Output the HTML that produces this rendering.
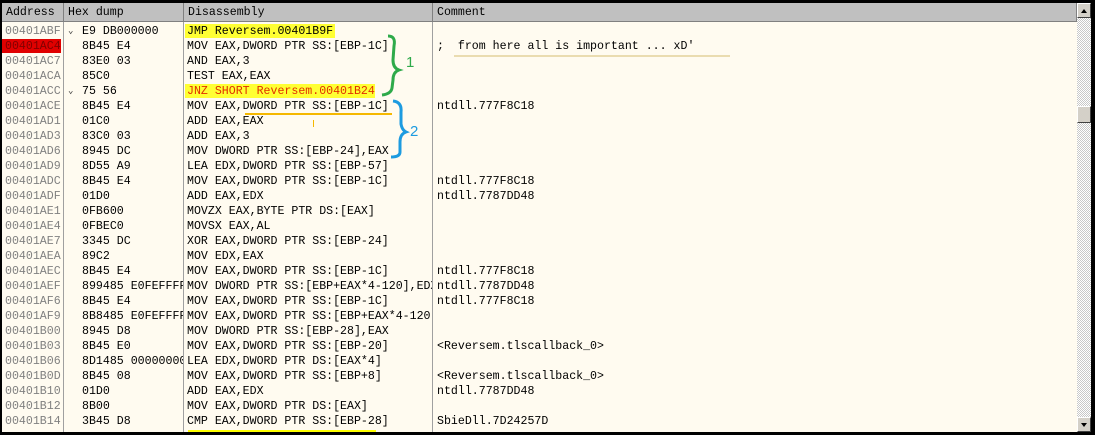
<!DOCTYPE html>
<html><head><meta charset="utf-8"><style>
body{margin:0;width:1095px;height:435px;background:#000;overflow:hidden;position:relative;font-family:"Liberation Mono","Courier New",monospace;font-size:11.6px;}
#win{position:absolute;left:2px;top:3px;width:1089px;height:429px;background:#fffbf0;overflow:hidden}
.hdr{position:absolute;top:0;height:19px;background:#c0c0c0;border-bottom:1px solid #808080;color:#000;line-height:19px;padding-left:4px;box-sizing:border-box;border-right:1px solid #808080}
.col{position:absolute;top:19px;bottom:0;border-right:1px solid #a0a0a0}
.r{position:absolute;height:15px;line-height:15px;white-space:pre}
.a{color:#808080;left:3px}
.h{left:80px;color:#000}
.d{left:185px;color:#000}
.c{left:435px;color:#000}
.sb{position:absolute;left:1075px;top:0;width:14px;height:429px;background:repeating-conic-gradient(#fff 0 25%,#c8c8c8 0 50%) 0 0/2px 2px}
.btn{position:absolute;left:0;width:14px;height:15px;background:#d4d0c8;border:1px solid;border-color:#fff #404040 #404040 #fff;box-sizing:border-box}
</style></head><body><div id="win">
<div class="hdr" style="left:0;width:62px">Address</div>
<div class="hdr" style="left:62px;width:120px">Hex dump</div>
<div class="hdr" style="left:182px;width:249px">Disassembly</div>
<div class="hdr" style="left:431px;width:644px">Comment</div>
<div class="col" style="left:0;width:61px"></div>
<div class="col" style="left:62px;width:119px"></div>
<div class="col" style="left:182px;width:248px"></div>
<div style="position:absolute;left:0;top:36px;width:59px;height:14px;background:#e00000"></div>
<div style="position:absolute;left:183px;top:21px;width:150px;height:14px;background:#ffff33"></div>
<div style="position:absolute;left:183px;top:81px;width:190px;height:14px;background:#ffff33"></div>
<div id="rows"></div>
<div style="position:absolute;left:243px;top:110px;width:147px;height:2px;background:#f5b800"></div>
<div style="position:absolute;left:311px;top:117px;width:1px;height:7px;background:#f5b800"></div>
<div style="position:absolute;left:452px;top:52px;width:276px;height:2px;background:#eadcb0"></div>
<div style="position:absolute;left:186px;top:427px;width:188px;height:3px;background:#ffff00"></div>
<svg style="position:absolute;left:0;top:1px" width="1089" height="429">
<path d="M386 32 Q394 32 392 42 L391 56 Q391 64 397 66 Q391 68 391 76 L390 84 Q389 90 380 91" fill="none" stroke="#2eaa4a" stroke-width="3"/>
<path d="M391 97 Q400 98 399 108 L399 120 Q400 126 404 128 Q398 130 398 138 L398 148 Q398 153 389 153" fill="none" stroke="#1d9be0" stroke-width="3"/>
<text x="404" y="63" font-family="Liberation Sans" font-size="15" fill="#2eaa4a">1</text>
<text x="408" y="132" font-family="Liberation Sans" font-size="15" fill="#1d9be0">2</text>
</svg>
<div class="sb"><div class="btn" style="top:0"><div style="position:absolute;left:3px;top:5px;border:3.5px solid transparent;border-bottom:4px solid #000;border-top:0"></div></div>
<div class="btn" style="top:103px;height:17px"></div>
<div class="btn" style="top:414px"><div style="position:absolute;left:3px;top:5px;border:3.5px solid transparent;border-top:4px solid #000;border-bottom:0"></div></div></div>
</div>
<script>
var R=[["00401ABF","E9 DB000000","JMP Reversem.00401B9F","",1],
["00401AC4","8B45 E4","MOV EAX,DWORD PTR SS:[EBP-1C]",";  from here all is important ... xD'"],
["00401AC7","83E0 03","AND EAX,3",""],
["00401ACA","85C0","TEST EAX,EAX",""],
["00401ACC","75 56","JNZ SHORT Reversem.00401B24","",1],
["00401ACE","8B45 E4","MOV EAX,DWORD PTR SS:[EBP-1C]","ntdll.777F8C18"],
["00401AD1","01C0","ADD EAX,EAX",""],
["00401AD3","83C0 03","ADD EAX,3",""],
["00401AD6","8945 DC","MOV DWORD PTR SS:[EBP-24],EAX",""],
["00401AD9","8D55 A9","LEA EDX,DWORD PTR SS:[EBP-57]",""],
["00401ADC","8B45 E4","MOV EAX,DWORD PTR SS:[EBP-1C]","ntdll.777F8C18"],
["00401ADF","01D0","ADD EAX,EDX","ntdll.7787DD48"],
["00401AE1","0FB600","MOVZX EAX,BYTE PTR DS:[EAX]",""],
["00401AE4","0FBEC0","MOVSX EAX,AL",""],
["00401AE7","3345 DC","XOR EAX,DWORD PTR SS:[EBP-24]",""],
["00401AEA","89C2","MOV EDX,EAX",""],
["00401AEC","8B45 E4","MOV EAX,DWORD PTR SS:[EBP-1C]","ntdll.777F8C18"],
["00401AEF","899485 E0FEFFFF","MOV DWORD PTR SS:[EBP+EAX*4-120],EDX","ntdll.7787DD48"],
["00401AF6","8B45 E4","MOV EAX,DWORD PTR SS:[EBP-1C]","ntdll.777F8C18"],
["00401AF9","8B8485 E0FEFFFF","MOV EAX,DWORD PTR SS:[EBP+EAX*4-120]",""],
["00401B00","8945 D8","MOV DWORD PTR SS:[EBP-28],EAX",""],
["00401B03","8B45 E0","MOV EAX,DWORD PTR SS:[EBP-20]","<Reversem.tlscallback_0>"],
["00401B06","8D1485 00000000","LEA EDX,DWORD PTR DS:[EAX*4]",""],
["00401B0D","8B45 08","MOV EAX,DWORD PTR SS:[EBP+8]","<Reversem.tlscallback_0>"],
["00401B10","01D0","ADD EAX,EDX","ntdll.7787DD48"],
["00401B12","8B00","MOV EAX,DWORD PTR DS:[EAX]",""],
["00401B14","3B45 D8","CMP EAX,DWORD PTR SS:[EBP-28]","SbieDll.7D24257D"]];
var h="";R.forEach(function(r,i){var t=21+i*15;
var ac=i==1?"color:#800000":"";
h+='<div class="r a" style="top:'+t+'px;'+ac+'">'+r[0]+'</div>';
h+='<div class="r h" style="top:'+t+'px;width:101px;overflow:hidden">'+r[1]+'</div>';
if(r[4])h+='<div class="r" style="top:'+t+'px;left:66px;font-size:9px;color:#333">&#8964;</div>';
var dc=i==4?"color:#e03000":"";
h+='<div class="r d" style="top:'+t+'px;'+dc+';width:245px;overflow:hidden">'+r[2]+'</div>';
h+='<div class="r c" style="top:'+t+'px">'+r[3].replace(/</g,"&lt;")+'</div>';});
document.getElementById("rows").innerHTML=h;
</script>
</body></html>
